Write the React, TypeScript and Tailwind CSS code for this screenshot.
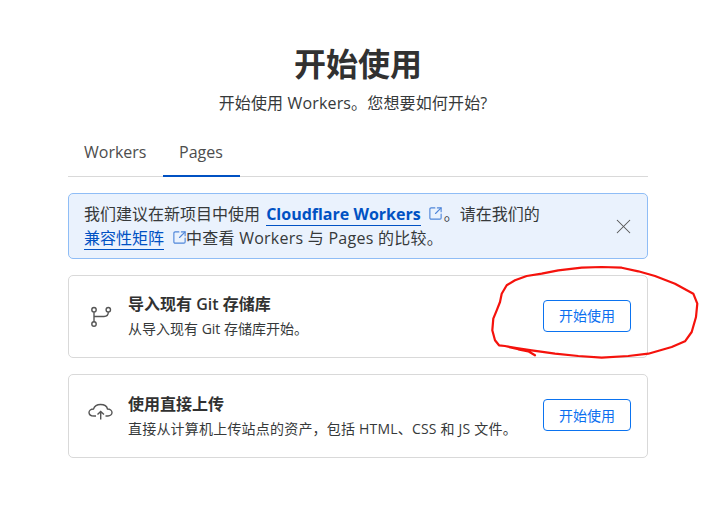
import { SquareArrowOutUpRight, X } from "lucide-react";
import type { ReactNode } from "react";

const font = "font-['Open_Sans','Noto_Sans_CJK_SC',sans-serif]";

const scribble =
  "535,355.3 528.3,351.3 518.3,349.3 505,346 499,345.3 495,340.3 492.3,330.3 493.3,318.7 496.7,310.3 500,302 501.7,293.7 506.7,285.3 515,280.3 526.7,276 541.7,273.7 558.3,270.3 581.7,267.7 601.7,267 621.7,267.7 638.3,271.3 655,276 675,283.7 693.3,293.7 697.3,303.7 696,317 691.7,332 685,341.3 671.7,347 648.3,353.7 628.3,356 601.7,357.7 578.3,356 555,353.7 531.7,350.3 516.7,348 505,346";

function GitIcon() {
  return (
    <svg width="24" height="24" viewBox="0 0 24 24" fill="none" stroke="#555" strokeWidth="1.4" className="shrink-0">
      <circle cx="6" cy="4.7" r="2.2" />
      <circle cx="6" cy="19" r="2.2" />
      <circle cx="20.3" cy="4.7" r="2.2" />
      <path d="M6 7V16.8M6 11.5H16C18.5 11.5 20.3 10 20.3 7" />
    </svg>
  );
}

function CloudIcon() {
  return (
    <svg width="26" height="20" viewBox="0 0 26 20" fill="none" stroke="#555" strokeWidth="1.4" className="shrink-0 mb-[6px]">
      <path d="M8 13H6C3 13 1 11.5 1 9.5C1 7.5 3 6 5.5 6C6.5 3 9.5 1.5 12.5 1.5C16.5 1.5 19 3.5 19.5 6C22 6 24 7.5 24 9.5C24 11.5 22 13 20 13H17.5" />
      <path d="M12.7 16.5V8.5M9.5 11.5L12.7 8.5L16 11.5" />
    </svg>
  );
}

function Card({ icon, title, text, className, textClass }: { icon: ReactNode; title: string; text: string; className: string; textClass?: string }) {
  return (
    <div className={`flex items-center border border-[#d9d9d9] rounded-[5px] bg-white pl-[19px] pr-[16px] ${className}`}>
      <div className="w-[40px] flex items-center">{icon}</div>
      <div className="flex-1 min-w-0 pb-[2px]">
        <div className="text-[16px] leading-[24px] font-semibold text-[#313131]">{title}</div>
        <div className={`text-[14px] leading-[20px] mt-[3px] text-[#36393a] whitespace-nowrap ${textClass ?? ""}`}>{text}</div>
      </div>
      <button className="w-[88px] h-[32px] mb-[2px] border border-[#0b73f0] rounded-[4px] bg-white text-[14px] text-[#0b6ff0]">开始使用</button>
    </div>
  );
}

export default function App() {
  return (
    <div className={`relative w-[727px] h-[530px] overflow-hidden bg-white ${font}`}>
      <div className="w-[580px] ml-[68px] pt-[40px]">
        <h1 className="text-[32px] leading-[48px] font-bold text-[#313131] text-center">开始使用</h1>
        <p className="text-[16px] leading-[24px] mt-[3px] pr-[10px] tracking-[0.15px] text-[#36393a] text-center">开始使用 Workers。您想要如何开始?</p>
        <div className="flex h-[41px] mt-[21px] border-b border-[#d9d9d9] text-[16px] text-[#4d4d4d]">
          <div className="w-[95px] pl-[16px] pt-[4px]">Workers</div>
          <div className="w-[77px] pl-[16px] pt-[4px] h-[41px] border-b-2 border-[#0051c3]">Pages</div>
        </div>
        <div className="flex items-center h-[66px] mt-[16px] border border-[#8fbdf6] rounded-[5px] bg-[#eaf2fd] pl-[15px] pr-[15px]">
          <div className="flex-1 text-[16px] leading-[24px] text-[#36393a] whitespace-nowrap">
            <div>
              我们建议在新项目中使用 <span className="ml-[2px] font-bold text-[#0051c3] border-b border-[#0051c3]">Cloudflare Workers</span>
              <SquareArrowOutUpRight size={15} strokeWidth={1.8} className="inline-block text-[#4f86d9] ml-[7px] mr-[1px] align-[-1px]" />。请在我们的
            </div>
            <div>
              <span className="text-[#0051c3] border-b border-[#0051c3]">兼容性矩阵</span>
              <SquareArrowOutUpRight size={15} strokeWidth={1.8} className="inline-block text-[#4f86d9] ml-[8px] mr-[-1px] align-[-1px]" />
              <span className="tracking-[0.25px]">中查看 Workers 与 Pages 的比较。</span>
            </div>
          </div>
          <X size={25} strokeWidth={1} className="text-[#555] -mr-[4px]" />
        </div>
        <Card className="h-[83px] mt-[16px]" icon={<GitIcon />} title="导入现有 Git 存储库" text="从导入现有 Git 存储库开始。" />
        <Card className="h-[84px] mt-[16px]" textClass="tracking-[0.2px]" icon={<CloudIcon />} title="使用直接上传" text={"直接从计算机上传站点的资产\uFF0C包括 HTML、CSS 和 JS 文件。"} />
      </div>
      <svg className="absolute inset-0 pointer-events-none" width="727" height="530" fill="none">
        <polyline points={scribble} stroke="#f5120c" strokeWidth="2.2" strokeLinejoin="round" strokeLinecap="round" />
      </svg>
    </div>
  );
}
